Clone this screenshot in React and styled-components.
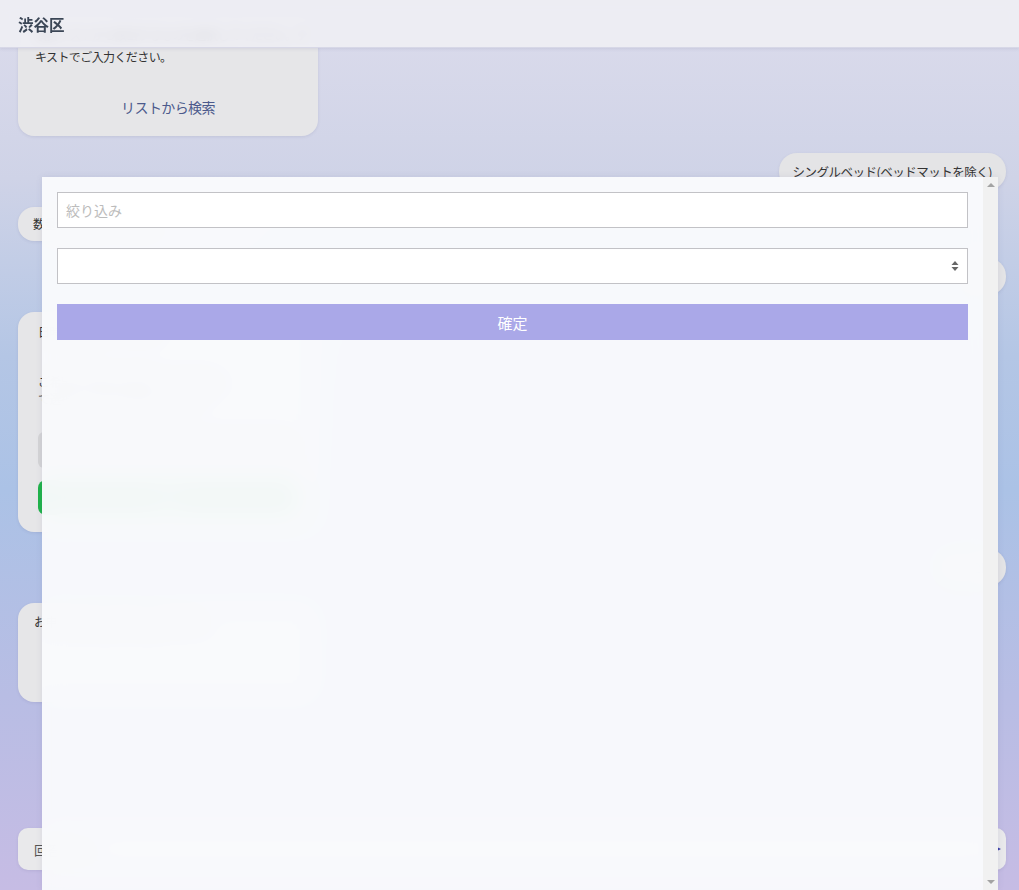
import React from 'react'
import styled, { createGlobalStyle } from 'styled-components'

const Global = createGlobalStyle`
  html, body {
    margin: 0;
    padding: 0;
  }
  body {
    font-family: "Noto Sans CJK JP", "Noto Sans", sans-serif;
    color: #333;
  }
  * {
    box-sizing: border-box;
  }
`

const Page = styled.div`
  position: relative;
  height: 100vh;
  overflow: hidden;
  background: linear-gradient(180deg, #dcdcec 0%, #cfd3e7 20%, #b4c6e5 40%, #abc2e6 55%, #b8bde4 78%, #c6bce4 100%);
`

const Header = styled.header`
  position: absolute;
  top: 0;
  left: 0;
  right: 0;
  height: 48px;
  display: flex;
  align-items: center;
  padding: 0 18px;
  background: rgba(238, 238, 244, 0.9);
  backdrop-filter: blur(6px);
  border-bottom: 1px solid rgba(150, 150, 190, 0.25);
  box-shadow: 0 1px 3px rgba(100, 100, 140, 0.15);
  z-index: 2;
  h1 {
    margin: 0;
    font-size: 15.5px;
    font-weight: 700;
    color: #3b4656;
  }
`

const Messages = styled.div`
  display: flex;
  flex-direction: column;
  gap: 17px;
  padding: 14px 13px 0 18px;
`

const BotBubble = styled.div`
  width: ${p => p.$width || 300}px;
  min-height: ${p => p.$height || 0}px;
  background: #e6e6e8;
  border-radius: 16px;
  padding: ${p => p.$pad || '10px 17px 18px'};
  font-size: 12px;
  letter-spacing: -0.6px;
  line-height: 22px;
  color: #333;
  box-shadow: 0 1px 3px rgba(80, 80, 120, 0.12);
  p {
    margin: 0;
    white-space: nowrap;
  }
`

const UserBubble = styled.div`
  align-self: flex-end;
  background: #e4e4e6;
  border-radius: 18px;
  padding: 8px 14px;
  font-size: 12.5px;
  letter-spacing: -0.5px;
  line-height: 21px;
  color: #333;
  box-shadow: 0 1px 3px rgba(80, 80, 120, 0.12);
`

const LinkText = styled.div`
  padding-top: 28px;
  text-align: center;
  font-size: 14px;
  letter-spacing: -0.6px;
  color: #4c5a8c;
`

const GreyField = styled.div`
  margin-top: 22px;
  height: 36px;
  border-radius: 6px;
  background: #d4d4d6;
`

const GreenButton = styled.div`
  margin-top: 12px;
  height: 35px;
  border-radius: 8px;
  background: #1fb34a;
  color: #fff;
  font-size: 14px;
  display: flex;
  align-items: center;
  justify-content: center;
`

const InputBar = styled.div`
  position: absolute;
  left: 18px;
  right: 13px;
  bottom: 20px;
  height: 42px;
  border-radius: 10px;
  background: #e9e9eb;
  display: flex;
  align-items: center;
  justify-content: space-between;
  padding: 0 4px 0 16px;
  font-size: 13px;
  color: #555;
  box-shadow: 0 1px 3px rgba(80, 80, 120, 0.12);
`

const Modal = styled.div`
  position: absolute;
  top: 177px;
  left: 42px;
  right: 21px;
  bottom: 0;
  z-index: 3;
  display: flex;
  background: rgba(249, 250, 252, 0.97);
  backdrop-filter: blur(12px);
  box-shadow: 0 0 6px rgba(90, 90, 130, 0.12);
`

const ModalBody = styled.div`
  flex: 1;
  padding: 15px;
`

const ScrollTrack = styled.div`
  width: 15px;
  flex-shrink: 0;
  background: rgba(240, 240, 240, 0.95);
  display: flex;
  flex-direction: column;
  align-items: center;
  justify-content: space-between;
  padding: 6px 0 6px;
`

const Arrow = styled.span`
  width: 0;
  height: 0;
  border-left: 4px solid transparent;
  border-right: 4px solid transparent;
  ${p => (p.$down ? 'border-top: 4px solid #a3a3a3;' : 'border-bottom: 4px solid #a3a3a3;')}
`

const Form = styled.div`
  display: flex;
  flex-direction: column;
  gap: 20px;
`

const TextInput = styled.input`
  width: 100%;
  height: 36px;
  border: 1px solid #c2c2c6;
  border-radius: 0;
  background: #fff;
  padding: 0 8px;
  font-family: inherit;
  font-size: 14px;
  color: #333;
  outline: none;
  &::placeholder {
    color: #bcbcbc;
  }
`

const SelectWrap = styled.div`
  position: relative;
  svg {
    position: absolute;
    right: 9px;
    top: 12px;
    pointer-events: none;
  }
`

const Select = styled.select`
  width: 100%;
  height: 36px;
  appearance: none;
  border: 1px solid #c2c2c6;
  border-radius: 0;
  background: #fff;
  padding: 0 8px;
  font-family: inherit;
  font-size: 14px;
  outline: none;
`

const Confirm = styled.button`
  height: 36px;
  border: none;
  border-radius: 0;
  background: #aaa8e8;
  color: #fff;
  font-family: inherit;
  font-size: 15px;
  cursor: pointer;
`

export default function App() {
  return (
    <Page>
      <Global />
      <Header>
        <h1>渋谷区</h1>
      </Header>
      <Messages>
        <BotBubble>
          <p>項目リストから該当するものを選択してください。テ</p>
          <p>キストでご入力ください。</p>
          <LinkText>リストから検索</LinkText>
        </BotBubble>
        <UserBubble>シングルベッド(ベッドマットを除く)</UserBubble>
        <BotBubble $width={230} $pad="6px 15px">数量を入力してください。</BotBubble>
        <UserBubble>1台</UserBubble>
        <BotBubble $height={220} $pad="9px 20px 14px">
          <p>日時を選択してください</p>
          <p style={{ marginTop: 28 }}>ご希望の収集日を選択してください。</p>
          <p style={{ marginTop: -5 }}>で選択した日付が反映されます。</p>
          <GreyField />
          <GreenButton>決定</GreenButton>
        </BotBubble>
        <UserBubble>3月12日</UserBubble>
        <BotBubble $height={99} $pad="8px 16px">
          <p>お申し込み内容をご確認ください。</p>
        </BotBubble>
      </Messages>
      <InputBar>
        <span>回答を入力</span>
        <svg width="12" height="12" viewBox="0 0 12 12">
          <path d="M1 1 L11 6 L1 11 L3 6 Z" fill="#3b3fa8" />
        </svg>
      </InputBar>
      <Modal>
        <ModalBody>
          <Form>
            <TextInput placeholder="絞り込み" />
            <SelectWrap>
              <Select defaultValue="">
                <option value=""></option>
              </Select>
              <svg width="8" height="12" viewBox="0 0 8 12">
                <path d="M4 1 L7.5 5 L0.5 5 Z M4 11 L7.5 7 L0.5 7 Z" fill="#666" />
              </svg>
            </SelectWrap>
            <Confirm>確定</Confirm>
          </Form>
        </ModalBody>
        <ScrollTrack>
          <Arrow />
          <Arrow $down />
        </ScrollTrack>
      </Modal>
    </Page>
  )
}
